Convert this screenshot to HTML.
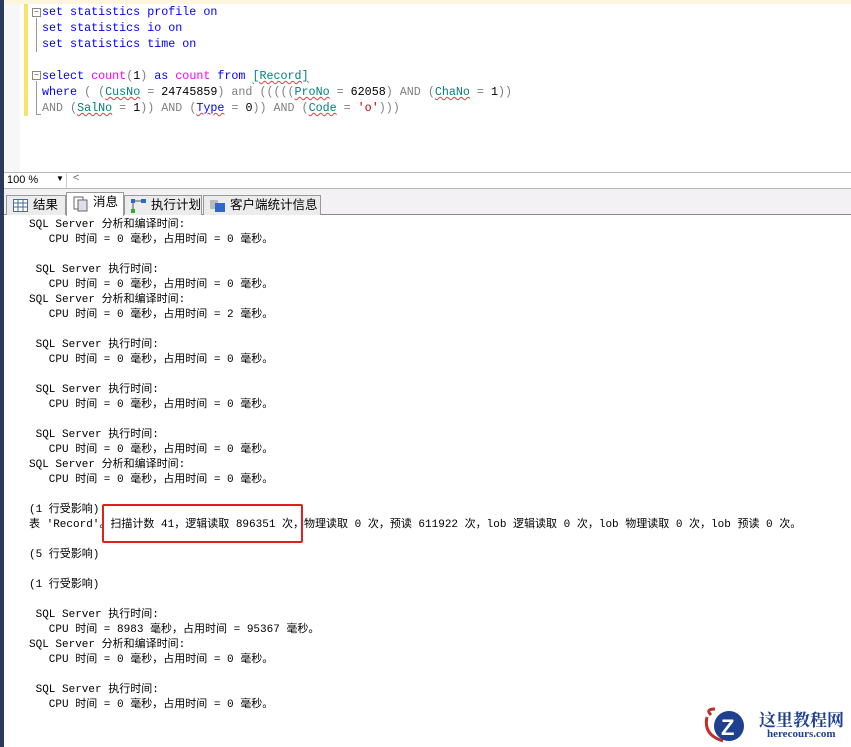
<!DOCTYPE html>
<html><head><meta charset="utf-8"><style>
*{margin:0;padding:0;box-sizing:border-box}
body{width:851px;height:747px;overflow:hidden;background:#fff;position:relative;font-family:"Liberation Mono",monospace}
.lstrip{position:absolute;left:0;top:0;width:4px;height:747px;background:#2b3a5c}
.topy{position:absolute;left:4px;top:0;width:847px;height:4px;background:#fdf6dc}
.gutter{position:absolute;left:4px;top:4px;width:16px;height:168px;background:#f7f7f7}
.ybar{position:absolute;left:24px;top:4px;width:4px;height:112px;background:#f4e66a}
.code{position:absolute;left:42px;top:4px;font-size:11.7px;line-height:16px;white-space:pre;color:#808080}
.k{color:#0000ff}.f{color:#ff00ff}.t{color:#008080}.s{color:#c00000}.n{color:#000}
.u{text-decoration:underline wavy #e04040;text-decoration-thickness:1px}
.fold{position:absolute;left:32px;width:9px;height:9px;border:1px solid #888;background:#fff;font-size:8px;line-height:7px;text-align:center;color:#444}
.fl{position:absolute;left:36px;width:1px;background:#999}
.tb{position:absolute;left:4px;top:172px;width:847px;height:17px;border-top:1px solid #b8b8b8;border-bottom:1px solid #b8b8b8;background:#fff;font-family:"Liberation Sans",sans-serif;font-size:11px}
.tabs{position:absolute;left:4px;top:189px;width:847px;height:26px;background:#f4f1f4;border-bottom:1px solid #888}
.tab{position:absolute;top:6px;height:20px;border:1px solid #999;border-bottom:none;background:#ececec;font-family:"Liberation Sans","Noto Sans CJK SC",sans-serif;font-size:12.5px;line-height:19px;padding-left:26px}
.out{position:absolute;left:29px;top:218px;font-family:"Liberation Mono","Noto Sans CJK SC",monospace;font-size:11px;line-height:15px;white-space:pre;color:#000;letter-spacing:0}
.red{position:absolute;left:102px;top:504px;width:201px;height:39px;border:2px solid #e02020;border-radius:2px}
</style></head><body>
<div class="lstrip"></div><div class="topy"></div><div class="gutter"></div><div class="ybar"></div>
<div class="fold" style="top:8px">−</div><div class="fl" style="top:18px;height:34px"></div>
<div class="fold" style="top:71px">−</div><div class="fl" style="top:81px;height:34px"></div><div style="position:absolute;left:36px;top:114px;width:5px;height:1px;background:#999"></div>
<div class="code"><span class="k">set statistics profile on</span>
<span class="k">set statistics io on</span>
<span class="k">set statistics time on</span>

<span class="k">select</span> <span class="f">count</span>(<span class="n">1</span>) <span class="k">as</span> <span class="f">count</span> <span class="k">from</span> <span class="t u">[Record]</span>
<span class="k">where</span> ( (<span class="t u">CusNo</span> = <span class="n">24745859</span>) and (((((<span class="t u">ProNo</span> = <span class="n">62058</span>) AND (<span class="t u">ChaNo</span> = <span class="n">1</span>))
AND (<span class="t u">SalNo</span> = <span class="n">1</span>)) AND (<span class="k u">Type</span> = <span class="n">0</span>)) AND (<span class="t u">Code</span> = <span class="s">'o'</span>)))</div>
<div class="tb"><span style="position:absolute;left:3px;top:1px">100 %</span><span style="position:absolute;left:52px;top:1px;font-size:8px">▼</span><span style="position:absolute;left:62px;top:-1px;height:16px;border-left:1px solid #ccc;padding-left:6px;color:#666">&lt;</span></div>
<div class="tabs">
<div class="tab" style="left:2px;width:60px"><svg style="position:absolute;left:6px;top:3px" width="15" height="13"><rect x="0.5" y="0.5" width="14" height="12" fill="#fff" stroke="#4a6a9a"/><path d="M0 4h15M0 8h15M5 0v13M10 0v13" stroke="#4a6a9a"/></svg>结果</div>
<div class="tab" style="left:62px;top:3px;height:24px;width:58px;background:#fff">
<svg style="position:absolute;left:6px;top:3px" width="15" height="16"><rect x="1" y="1" width="9" height="12" fill="#fff" stroke="#666"/><rect x="5" y="4" width="9" height="11" fill="#dde" stroke="#666"/></svg>消息</div>
<div class="tab" style="left:120px;width:78px"><svg style="position:absolute;left:5px;top:2px" width="18" height="16"><rect x="1" y="1" width="4" height="4" fill="#36c"/><rect x="11" y="1" width="5" height="4" fill="#36c"/><rect x="1" y="11" width="4" height="4" fill="#3a3"/><path d="M3 5v6M5 3h6" stroke="#555"/></svg>执行计划</div>
<div class="tab" style="left:199px;width:118px"><svg style="position:absolute;left:5px;top:2px" width="18" height="16"><rect x="1" y="2" width="8" height="9" fill="#bbb"/><rect x="6" y="5" width="10" height="9" fill="#36c"/></svg>客户端统计信息</div>
</div>
<div class="out">SQL Server 分析和编译时间:
   CPU 时间 = 0 毫秒，占用时间 = 0 毫秒。

 SQL Server 执行时间:
   CPU 时间 = 0 毫秒，占用时间 = 0 毫秒。
SQL Server 分析和编译时间:
   CPU 时间 = 0 毫秒，占用时间 = 2 毫秒。

 SQL Server 执行时间:
   CPU 时间 = 0 毫秒，占用时间 = 0 毫秒。

 SQL Server 执行时间:
   CPU 时间 = 0 毫秒，占用时间 = 0 毫秒。

 SQL Server 执行时间:
   CPU 时间 = 0 毫秒，占用时间 = 0 毫秒。
SQL Server 分析和编译时间:
   CPU 时间 = 0 毫秒，占用时间 = 0 毫秒。

(1 行受影响)
表 'Record'。扫描计数 41，逻辑读取 896351 次，物理读取 0 次，预读 611922 次，lob 逻辑读取 0 次，lob 物理读取 0 次，lob 预读 0 次。

(5 行受影响)

(1 行受影响)

 SQL Server 执行时间:
   CPU 时间 = 8983 毫秒，占用时间 = 95367 毫秒。
SQL Server 分析和编译时间:
   CPU 时间 = 0 毫秒，占用时间 = 0 毫秒。

 SQL Server 执行时间:
   CPU 时间 = 0 毫秒，占用时间 = 0 毫秒。</div>
<div class="red"></div>
<svg style="position:absolute;left:703px;top:705px" width="50" height="40"><path d="M8 10 Q2 4 12 4" stroke="#c0302a" stroke-width="3" fill="none"/><path d="M4 12 Q0 30 20 36" stroke="#c0302a" stroke-width="3" fill="none"/><circle cx="26" cy="21" r="15" fill="#1f3f8f"/><text x="18" y="30" font-family="Liberation Sans" font-weight="bold" font-size="22" fill="#fff">Z</text></svg>
<div style="position:absolute;left:759px;top:706px;font-family:'Liberation Serif','Noto Serif CJK SC',serif;font-weight:bold;font-size:17px;color:#1f3f8f;letter-spacing:0px">这里教程网</div>
<div style="position:absolute;left:767px;top:728px;font-family:'Liberation Serif',serif;font-weight:bold;font-size:11px;color:#1f3f8f">herecours.com</div>
</body></html>
